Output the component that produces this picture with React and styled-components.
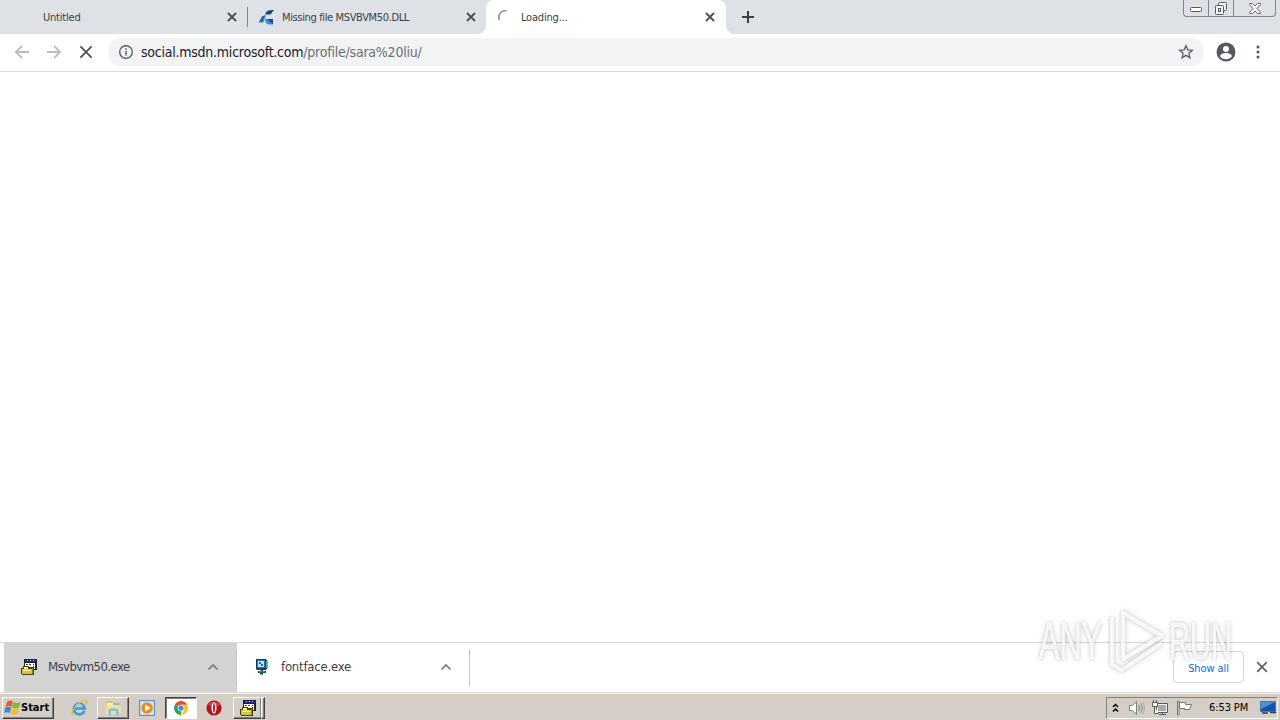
import React from 'react'
import styled, { createGlobalStyle } from 'styled-components'

const GlobalStyle = createGlobalStyle`
  * {
    box-sizing: border-box;
  }
  body {
    margin: 0;
    overflow: hidden;
  }
  button {
    padding: 0;
    border: 0;
    background: transparent;
    font: inherit;
  }
  svg {
    display: block;
    flex: none;
  }
`

const Screen = styled.div`
  display: flex;
  flex-direction: column;
  position: relative;
  width: 1280px;
  height: 720px;
  overflow: hidden;
  background-color: #fff;
  font-family: 'DejaVu Sans Condensed', 'DejaVu Sans', sans-serif;
  color: #3c4043;
`

const Label = styled.span`
  font-size: ${props => props.$size || 11}px;
  letter-spacing: ${props => props.$spacing || 0}px;
  font-weight: ${props => (props.$bold ? 700 : 400)};
  color: ${props => props.$color || 'inherit'};
  line-height: 16px;
  white-space: nowrap;
`

const TabStrip = styled.header`
  display: flex;
  height: 34px;
  background-color: #dee1e6;
`

const Tab = styled.div`
  display: flex;
  align-items: center;
  position: relative;
  width: ${props => props.$width}px;
  height: 34px;
  padding: ${props => (props.$active ? '0 11px 0 12px' : '0 10px 0 11px')};
  border-radius: ${props => (props.$active ? '8px 8px 0 0' : 0)};
  background-color: ${props => (props.$active ? '#fff' : 'transparent')};

  &::before,
  &::after {
    content: '';
    display: ${props => (props.$active ? 'block' : 'none')};
    position: absolute;
    bottom: 0;
    width: 8px;
    height: 8px;
  }
  &::before {
    left: -8px;
    background: radial-gradient(circle at 0 0, transparent 7.5px, #fff 8px);
  }
  &::after {
    right: -8px;
    background: radial-gradient(circle at 100% 0, transparent 7.5px, #fff 8px);
  }
`

const TabDivider = styled.div`
  width: 1px;
  height: 20px;
  margin-top: 7px;
  background-color: #80868b;
`

const TabIcon = styled.div`
  width: 16px;
  height: 16px;
  margin-right: ${props => props.$gap || 7}px;
`

const TabTitle = styled.div`
  display: flex;
  flex: 1;
  padding-top: 2px;
`

const NewTab = styled.button`
  display: flex;
  align-items: center;
  justify-content: center;
  width: 28px;
  height: 34px;
  margin-left: 8px;
`

const CaptionButtons = styled.div`
  display: flex;
  width: 93px;
  height: 17px;
  margin-left: auto;
  margin-right: 4px;
  border: 1px solid #7f858e;
  border-top: 0;
  border-radius: 0 0 4px 4px;
`

const CaptionButton = styled.button`
  display: flex;
  align-items: center;
  justify-content: center;
  width: ${props => props.$width}px;
  height: 16px;
  padding-top: ${props => props.$drop || 0}px;
  border-right: ${props => (props.$last ? 0 : '1px solid #7f858e')};
`

const Toolbar = styled.nav`
  display: flex;
  align-items: center;
  height: 38px;
  padding: 0 12px 2px 12px;
  border-bottom: 1px solid #d9dadc;
`

const ToolButton = styled.button`
  display: flex;
  align-items: center;
  justify-content: center;
  width: 20px;
  height: 28px;
  margin-right: ${props => props.$gap || 0}px;
`

const AddressBar = styled.div`
  display: flex;
  align-items: center;
  width: 1096px;
  height: 28px;
  margin-right: 12px;
  padding: 0 10px;
  border-radius: 14px;
  background-color: #f1f3f4;
`

const Url = styled.div`
  display: flex;
  flex: 1;
  margin-left: 7px;
`

const Page = styled.main`
  flex: 1;
  background-color: #fff;
`

const DownloadShelf = styled.section`
  display: flex;
  height: 51px;
  padding-left: 4px;
  border-top: 1px solid #d6d7d9;
  border-bottom: 1px solid #dedbd6;
`

const Download = styled.div`
  display: flex;
  align-items: center;
  width: ${props => (props.$active ? 233 : 232)}px;
  height: 49px;
  margin-right: ${props => (props.$active ? -1 : 0)}px;
  padding: 0 ${props => (props.$active ? 18 : 17)}px 2px 17px;
  background-color: ${props => (props.$active ? '#d3d3d3' : '#fff')};
`

const DownloadName = styled.div`
  display: flex;
  flex: 1;
  margin-left: 11px;
`

const ShelfDivider = styled.div`
  width: 1px;
  height: 37px;
  margin-top: 6px;
  background-color: #c4c4c4;
`

const ShelfActions = styled.div`
  display: flex;
  align-items: flex-start;
  margin-left: auto;
  padding: 8px 12px 0 0;
`

const ShowAll = styled.button`
  width: 71px;
  height: 32px;
  margin-right: 12px;
  padding-bottom: 1px;
  border: 1px solid #d4d7da;
  border-radius: 4px;
`

const CloseShelf = styled.button`
  margin-top: 10px;
`

const Taskbar = styled.footer`
  display: flex;
  align-items: center;
  height: 27px;
  padding: 1px 2px 0;
  border-top: 1px solid #f4f2ef;
  background-color: #d5cec6;
`

const TaskButton = styled.button`
  display: flex;
  align-items: center;
  justify-content: center;
  width: ${props => props.$width}px;
  height: 22px;
  margin-right: ${props => props.$gap || 0}px;
  border: 1px solid;
  border-color: ${props => (props.$pressed ? '#404040 #fff #fff #404040' : '#fff #404040 #404040 #fff')};
  background-color: ${props => (props.$pressed ? '#fff' : '#d5cec6')};
  box-shadow: inset ${props => (props.$pressed ? '1px 1px 0 #808080' : '-1px -1px 0 #808080')};
`

const StartButton = styled(TaskButton)`
  justify-content: flex-start;
  padding-left: 1px;
  color: #000;
`

const QuickLaunch = styled.div`
  width: 16px;
  height: 16px;
  margin-right: ${props => props.$gap}px;
`

const StackEdge = styled.div`
  width: 4px;
  height: 22px;
  margin-left: -1px;
  border: 1px solid;
  border-color: #fff #404040 #404040 #fff;
  box-shadow: inset -1px -1px 0 #808080;
`

const Tray = styled.div`
  display: flex;
  align-items: center;
  width: 172px;
  height: 22px;
  margin-left: auto;
  padding-left: 5px;
  border: 1px solid;
  border-color: #808080 #fff #fff #808080;
  color: #000;
`

const TrayItem = styled.div`
  display: flex;
  width: ${props => props.$width}px;
  margin-right: ${props => props.$gap || 0}px;
`

const Watermark = styled.div`
  position: absolute;
  left: 1030px;
  top: 600px;
  pointer-events: none;
`

const WatermarkArt = styled.svg`
  overflow: visible;
  filter: drop-shadow(0 0 1px rgba(0, 0, 0, 0.16)) drop-shadow(0 0 2.5px rgba(0, 0, 0, 0.2));
`

const Cross = ({ size, width, color }) => (
  <svg width={size} height={size} viewBox='0 0 10 10'>
    <path d='M1 1 9 9M9 1 1 9' stroke={color} strokeWidth={width} />
  </svg>
)

const Arrow = ({ flip }) => (
  <svg width='16' height='16' viewBox='0 0 16 16' fill='none' stroke='#babcbe' strokeWidth='1.8'>
    <path d={flip ? 'M1 8h13M8 1.8 14.2 8 8 14.2' : 'M15 8H2M8 1.8 1.8 8 8 14.2'} />
  </svg>
)

const Chevron = () => (
  <svg width='12' height='8' viewBox='0 0 12 8'>
    <path d='M1.5 6.5 6 2l4.5 4.5' fill='none' stroke='#77797b' strokeWidth='1.7' />
  </svg>
)

const PageFavicon = () => (
  <svg width='16' height='16' viewBox='0 0 16 16'>
    <path d='M6.5 4Q8 .5 15 1l-3.500 4.500h-5Z' fill='#19458c' />
    <path d='M0 13.500 3.500 7 7 6 4.500 13.500Z' fill='#3a9bcb' />
    <path d='M0 13 3 7.500 6.500 6.500 3 13Z' fill='#2469a4' />
    <path d='M6 10h8v5.500H9Q6 14 6 10Z' fill='#3a8fd0' />
    <path d='M8 10h6v5Z' fill='#174a91' />
  </svg>
)

const Installer = () => (
  <svg width='16' height='16' viewBox='0 0 16 16' shapeRendering='crispEdges'>
    <path d='M3 0h13v11H3z' fill='#222' />
    <path d='M4 1h11v2H4z' fill='#15258e' />
    <path d='M4 4h10v6H4z' fill='#fff' />
    <path d='M6 1h1v1H6zM9 1h1v1H9zM12 1h1v1h-1z' fill='#fff' />
    <path d='M5 5h2v1H5zM8 5h2v1H8zM12 5h1v1h-1zM12 7h1v2h-1z' fill='#333' />
    <path d='M0 9h2V7h6v1h5v8H1v-1H0z' fill='#45400b' />
    <path d='M1 10h10v5H1z' fill='#d2c545' />
    <path d='M3 8h4v2H3zM2 11h8v1H2z' fill='#fff187' />
    <path d='M11 9h1v6h-1z' fill='#8d821d' />
  </svg>
)

const ZipMonitor = () => (
  <svg width='16' height='17' viewBox='0 0 16 17'>
    <path d='M2 1h10l1.500 2v7L12 12H9v1h3v2H9v1.500H6V15H4v-2h3v-1H3l-1-1Z' fill='#123f60' />
    <path d='M3 2h8v8H3z' fill='#2477a9' />
    <path d='M4 3h6v6H4z' fill='#b9e9ff' />
    <path d='M5 4h2v2H5zM7 6h2v2H7z' fill='#2567b3' />
    <path d='M12 3h.8v7H12zM5 13.500h6v.8H5z' fill='#6fbfd9' />
  </svg>
)

const WindowsFlag = () => (
  <svg width='17' height='17' viewBox='0 0 17 17'>
    <path d='M3.200 2.500Q6 .5 9 2.500L7.500 8Q5 6 1.500 8Z' fill='#ed5a25' />
    <path d='M9.600 3Q13 5 16.500 3L15 8.500q-3.500 2-7 0Z' fill='#7fb83b' />
    <path d='M1.300 8.700Q4.500 7 7.300 8.700L5.700 14Q3 12.500 0 14Z' fill='#3c85cf' />
    <path d='M7.900 9.200q3.500 2 7 0L13.300 15q-3.500 1.500-7-.5Z' fill='#f8be26' />
  </svg>
)

const Explorer = () => (
  <svg width='17' height='16' viewBox='0 0 17 16'>
    <path d='M1 1h6l1 2h7v11H1Z' fill='#dcc06a' />
    <path d='M2 3h11v9H2z' fill='#fff5ba' />
    <path d='M8 3h6v2H8z' fill='#83bfcd' />
    <path d='M1 5.500h15V14H1z' fill='#f3df91' />
    <path d='M3.500 15.500V11q0-2.500 2.500-2.500h5q2.500 0 2.500 2.500v4.500H11V11H6v4.500Z' fill='#7ac3e4' />
  </svg>
)

const InternetExplorer = () => (
  <svg width='17' height='16' viewBox='0 0 17 16' fill='none'>
    <path d='M13.500 10.800A5.500 5.300 0 1 1 13.800 8.500H4' stroke='#369fdc' strokeWidth='2.600' />
    <path d='M2 15C-2 12 10-1 15 1c1.500 1 .5 3-.5 4' stroke='#e2b840' strokeWidth='1.200' />
    <path d='M4.500 5.500Q8 2.500 11.500 5.500' stroke='#9bdcfb' />
  </svg>
)

const MediaPlayer = () => (
  <svg width='16' height='16' viewBox='0 0 16 16'>
    <rect x='.5' y='.5' width='15' height='15' fill='#b9daf1' stroke='#5b93c2' />
    <rect x='2' y='2' width='12' height='12' fill='#d4e9f7' />
    <circle cx='8' cy='8' r='5.800' fill='#f18a1e' />
    <path d='m6 4.500 5.500 3.500L6 11.500Z' fill='#fff' />
  </svg>
)

const Chrome = () => (
  <svg width='14' height='14' viewBox='0 0 16 16'>
    <path d='M8 8 1.100 4a8 8 0 0 1 13.800 0Z' fill='#e94436' />
    <path d='M8 8v8A8 8 0 0 1 1.100 4Z' fill='#2ea455' />
    <path d='M8 8V4h6.900A8 8 0 0 1 8 16l3.500-6Z' fill='#fbc618' />
    <circle cx='8' cy='8' r='3.800' fill='#fff' />
    <circle cx='8' cy='8' r='3' fill='#4285f4' />
  </svg>
)

const Opera = () => (
  <svg width='16' height='16' viewBox='0 0 16 16'>
    <circle cx='8' cy='8' r='7.600' fill='#b0151c' />
    <path d='M2 5a7 7 0 0 1 12 0Q8 8 2 5Z' fill='#cf4449' />
    <ellipse cx='8' cy='8' rx='2.500' ry='5.600' fill='#fff' />
    <ellipse cx='8' cy='8' rx='1' ry='4.600' fill='#bd1820' />
  </svg>
)

const Speaker = () => (
  <svg width='17' height='16' viewBox='0 0 17 16' fill='none' stroke='#808080'>
    <path d='M1.500 5.500h3l4-4v13l-4-4h-3Z' fill='#fff' />
    <path d='M10.500 5q2 3 0 6M12.500 3.500q3.500 4.500 0 9' />
    <path d='M14.500 2q4 6 0 12' stroke='#aaa' />
  </svg>
)

const Network = () => (
  <svg width='16' height='16' viewBox='0 0 16 16'>
    <path d='M4.500 3.500h11v9h-11zM7 14.500h7M10.500 12.500v2' fill='#f2f2f2' stroke='#5a5a5a' />
    <path d='M6 5h8v6H6z' fill='#aaa' />
    <path d='M.5 2.500h5v4h-5zM1.500 0v3M4.500 0v3M2.500 7v6.500h4' fill='#fff' stroke='#5a5a5a' />
  </svg>
)

const Flag = () => (
  <svg width='17' height='16' viewBox='0 0 17 16'>
    <path d='M1.500 1v14h1.500V1ZM3.500 2.500h6v2h6l-2 5h-5v-1h-5Z' fill='#fff' stroke='#747474' />
  </svg>
)

const Desktop = () => (
  <svg width='16' height='15' viewBox='0 0 16 15'>
    <path d='M.5 1.500h15v10H.5Z' fill='#1454ae' stroke='#457bb5' />
    <path d='M1 2h14L1 9Z' fill='#5290d3' />
    <path d='M2 13h6M10 12.500h6' stroke='#303d50' strokeWidth='1.500' />
  </svg>
)

const AnyRun = () => (
  <WatermarkArt width='220' height='85' viewBox='0 0 220 85'>
    <g
      fill='#fff'
      fillOpacity='.8'
      stroke='#fff'
      strokeOpacity='.8'
      strokeWidth='.8'
      fontFamily='Liberation Sans, sans-serif'
      fontSize='51'
    >
      <text x='9' y='59' textLength='63' lengthAdjust='spacingAndGlyphs'>ANY</text>
      <text x='139' y='59' textLength='63' lengthAdjust='spacingAndGlyphs'>RUN</text>
    </g>
    <g fill='none' stroke='#fff' strokeOpacity='.85' strokeLinejoin='round'>
      <path d='M93 13v46l39-23Z' strokeWidth='4.500' />
      <path d='M82 17v48l10 5 40-27' strokeWidth='4' />
    </g>
  </WatermarkArt>
)

const TabStripBar = () => (
  <TabStrip>
    <Tab $width={247}>
      <TabIcon $gap={16} />
      <TabTitle>
        <Label $spacing={-0.2}>Untitled</Label>
      </TabTitle>
      <Cross size={10} width={1.8} color='#4b4e53' />
    </Tab>
    <TabDivider />
    <Tab $width={238}>
      <TabIcon>
        <PageFavicon />
      </TabIcon>
      <TabTitle>
        <Label $spacing={-0.36}>Missing file MSVBVM50.DLL</Label>
      </TabTitle>
      <Cross size={10} width={1.8} color='#4b4e53' />
    </Tab>
    <Tab $active $width={240}>
      <TabIcon>
        <svg width='16' height='16' viewBox='0 0 16 16'>
          <path d='M1.500 11A6.500 6.500 0 0 1 8.500 1.800' fill='none' stroke='#999' strokeWidth='1.800' />
        </svg>
      </TabIcon>
      <TabTitle>
        <Label $spacing={-0.2}>Loading...</Label>
      </TabTitle>
      <Cross size={10} width={1.8} color='#4b4e53' />
    </Tab>
    <NewTab>
      <svg width='12' height='12' viewBox='0 0 12 12'>
        <path d='M6 0v12M0 6h12' stroke='#3c4043' strokeWidth='2' />
      </svg>
    </NewTab>
    <CaptionButtons>
      <CaptionButton $width={25} $drop={3}>
        <svg width='12' height='5' viewBox='0 0 12 5'>
          <rect x='.5' y='.5' width='11' height='4' rx='1' fill='#fff' stroke='#555b64' />
        </svg>
      </CaptionButton>
      <CaptionButton $width={25}>
        <svg width='14' height='13' viewBox='0 0 14 13' fill='#f5f5f6' stroke='#555b64'>
          <rect x='4.500' y='.5' width='8' height='8' rx='1' />
          <rect x='1.500' y='3.500' width='8' height='9' rx='1' />
          <rect x='4.500' y='6.500' width='2' height='3' />
        </svg>
      </CaptionButton>
      <CaptionButton $last $width={41}>
        <svg width='12' height='11' viewBox='0 0 12 11'>
          <path
            d='M.5.5h3L6 3 8.500.5h3v1L8 5.500l3.500 4v1h-3L6 8l-2.500 2.500h-3v-1L4 5.500.5 1.500Z'
            fill='#f5f5f6'
            stroke='#666c74'
          />
        </svg>
      </CaptionButton>
    </CaptionButtons>
  </TabStrip>
)

const NavigationBar = () => (
  <Toolbar>
    <ToolButton $gap={12}>
      <Arrow />
    </ToolButton>
    <ToolButton $gap={12}>
      <Arrow flip />
    </ToolButton>
    <ToolButton $gap={12}>
      <Cross size={14} width={1.35} color='#505358' />
    </ToolButton>
    <AddressBar>
      <svg width='16' height='16' viewBox='0 0 16 16'>
        <circle cx='8' cy='8' r='6.300' fill='none' stroke='#5f6368' strokeWidth='1.400' />
        <path d='M8 7v4.500M8 4.300v1.600' stroke='#5f6368' strokeWidth='1.500' />
      </svg>
      <Url>
        <Label $size={14} $spacing={-0.24} $color='#202124'>social.msdn.microsoft.com</Label>
        <Label $size={14} $spacing={-0.22} $color='#6b6f73'>/profile/sara%20liu/</Label>
      </Url>
      <svg width='16' height='16' viewBox='0 0 16 16'>
        <path
          d='m8 1.800 1.800 4.100 4.500.4-3.400 3 1 4.400L8 11.400l-3.900 2.300 1-4.400-3.400-3 4.500-.4Z'
          fill='none'
          stroke='#5f6368'
          strokeWidth='1.400'
        />
      </svg>
    </AddressBar>
    <ToolButton $gap={12}>
      <svg width='20' height='20' viewBox='0 0 20 20'>
        <circle cx='10' cy='10' r='9.500' fill='#55585d' />
        <circle cx='10' cy='7' r='3' fill='#fff' />
        <path d='M4 14.300q1-3.300 6-3.300t6 3.300q-2 3-6 3t-6-3Z' fill='#fff' />
      </svg>
    </ToolButton>
    <ToolButton>
      <svg width='4' height='14' viewBox='0 0 4 14' fill='#55585d'>
        <circle cx='2' cy='2' r='1.500' />
        <circle cx='2' cy='7' r='1.500' />
        <circle cx='2' cy='12' r='1.500' />
      </svg>
    </ToolButton>
  </Toolbar>
)

const Downloads = () => (
  <DownloadShelf>
    <Download $active>
      <Installer />
      <DownloadName>
        <Label $size={13} $spacing={-0.55}>Msvbvm50.exe</Label>
      </DownloadName>
      <Chevron />
    </Download>
    <ShelfDivider />
    <Download>
      <ZipMonitor />
      <DownloadName>
        <Label $size={13} $spacing={-0.22}>fontface.exe</Label>
      </DownloadName>
      <Chevron />
    </Download>
    <ShelfDivider />
    <ShelfActions>
      <ShowAll>
        <Label $spacing={-0.1} $color='#1967d2'>Show all</Label>
      </ShowAll>
      <CloseShelf>
        <Cross size={12} width={1.5} color='#63666a' />
      </CloseShelf>
    </ShelfActions>
  </DownloadShelf>
)

const WindowsTaskbar = () => (
  <Taskbar>
    <StartButton $width={52} $gap={17}>
      <WindowsFlag />
      <Label $bold $spacing={0}>Start</Label>
    </StartButton>
    <QuickLaunch $gap={10}>
      <InternetExplorer />
    </QuickLaunch>
    <TaskButton $width={32} $gap={10}>
      <Explorer />
    </TaskButton>
    <QuickLaunch $gap={10}>
      <MediaPlayer />
    </QuickLaunch>
    <TaskButton $pressed $width={32} $gap={9}>
      <Chrome />
    </TaskButton>
    <QuickLaunch $gap={11}>
      <Opera />
    </QuickLaunch>
    <TaskButton $width={29}>
      <Installer />
    </TaskButton>
    <StackEdge />
    <Tray>
      <TrayItem $width={7} $gap={9}>
        <svg width='7' height='10' viewBox='0 0 7 10' fill='none' stroke='#000' strokeWidth='1.500'>
          <path d='m1 4 2.500-2.500L6 4M1 8.500 3.500 6 6 8.500' />
        </svg>
      </TrayItem>
      <TrayItem $width={17} $gap={7}>
        <Speaker />
      </TrayItem>
      <TrayItem $width={16} $gap={8}>
        <Network />
      </TrayItem>
      <TrayItem $width={17} $gap={16}>
        <Flag />
      </TrayItem>
      <TrayItem $width={40} $gap={11}>
        <Label $spacing={-0.1}>6:53 PM</Label>
      </TrayItem>
      <Desktop />
    </Tray>
  </Taskbar>
)

const App = () => (
  <Screen>
    <GlobalStyle />
    <TabStripBar />
    <NavigationBar />
    <Page />
    <Downloads />
    <WindowsTaskbar />
    <Watermark>
      <AnyRun />
    </Watermark>
  </Screen>
)

export default App
